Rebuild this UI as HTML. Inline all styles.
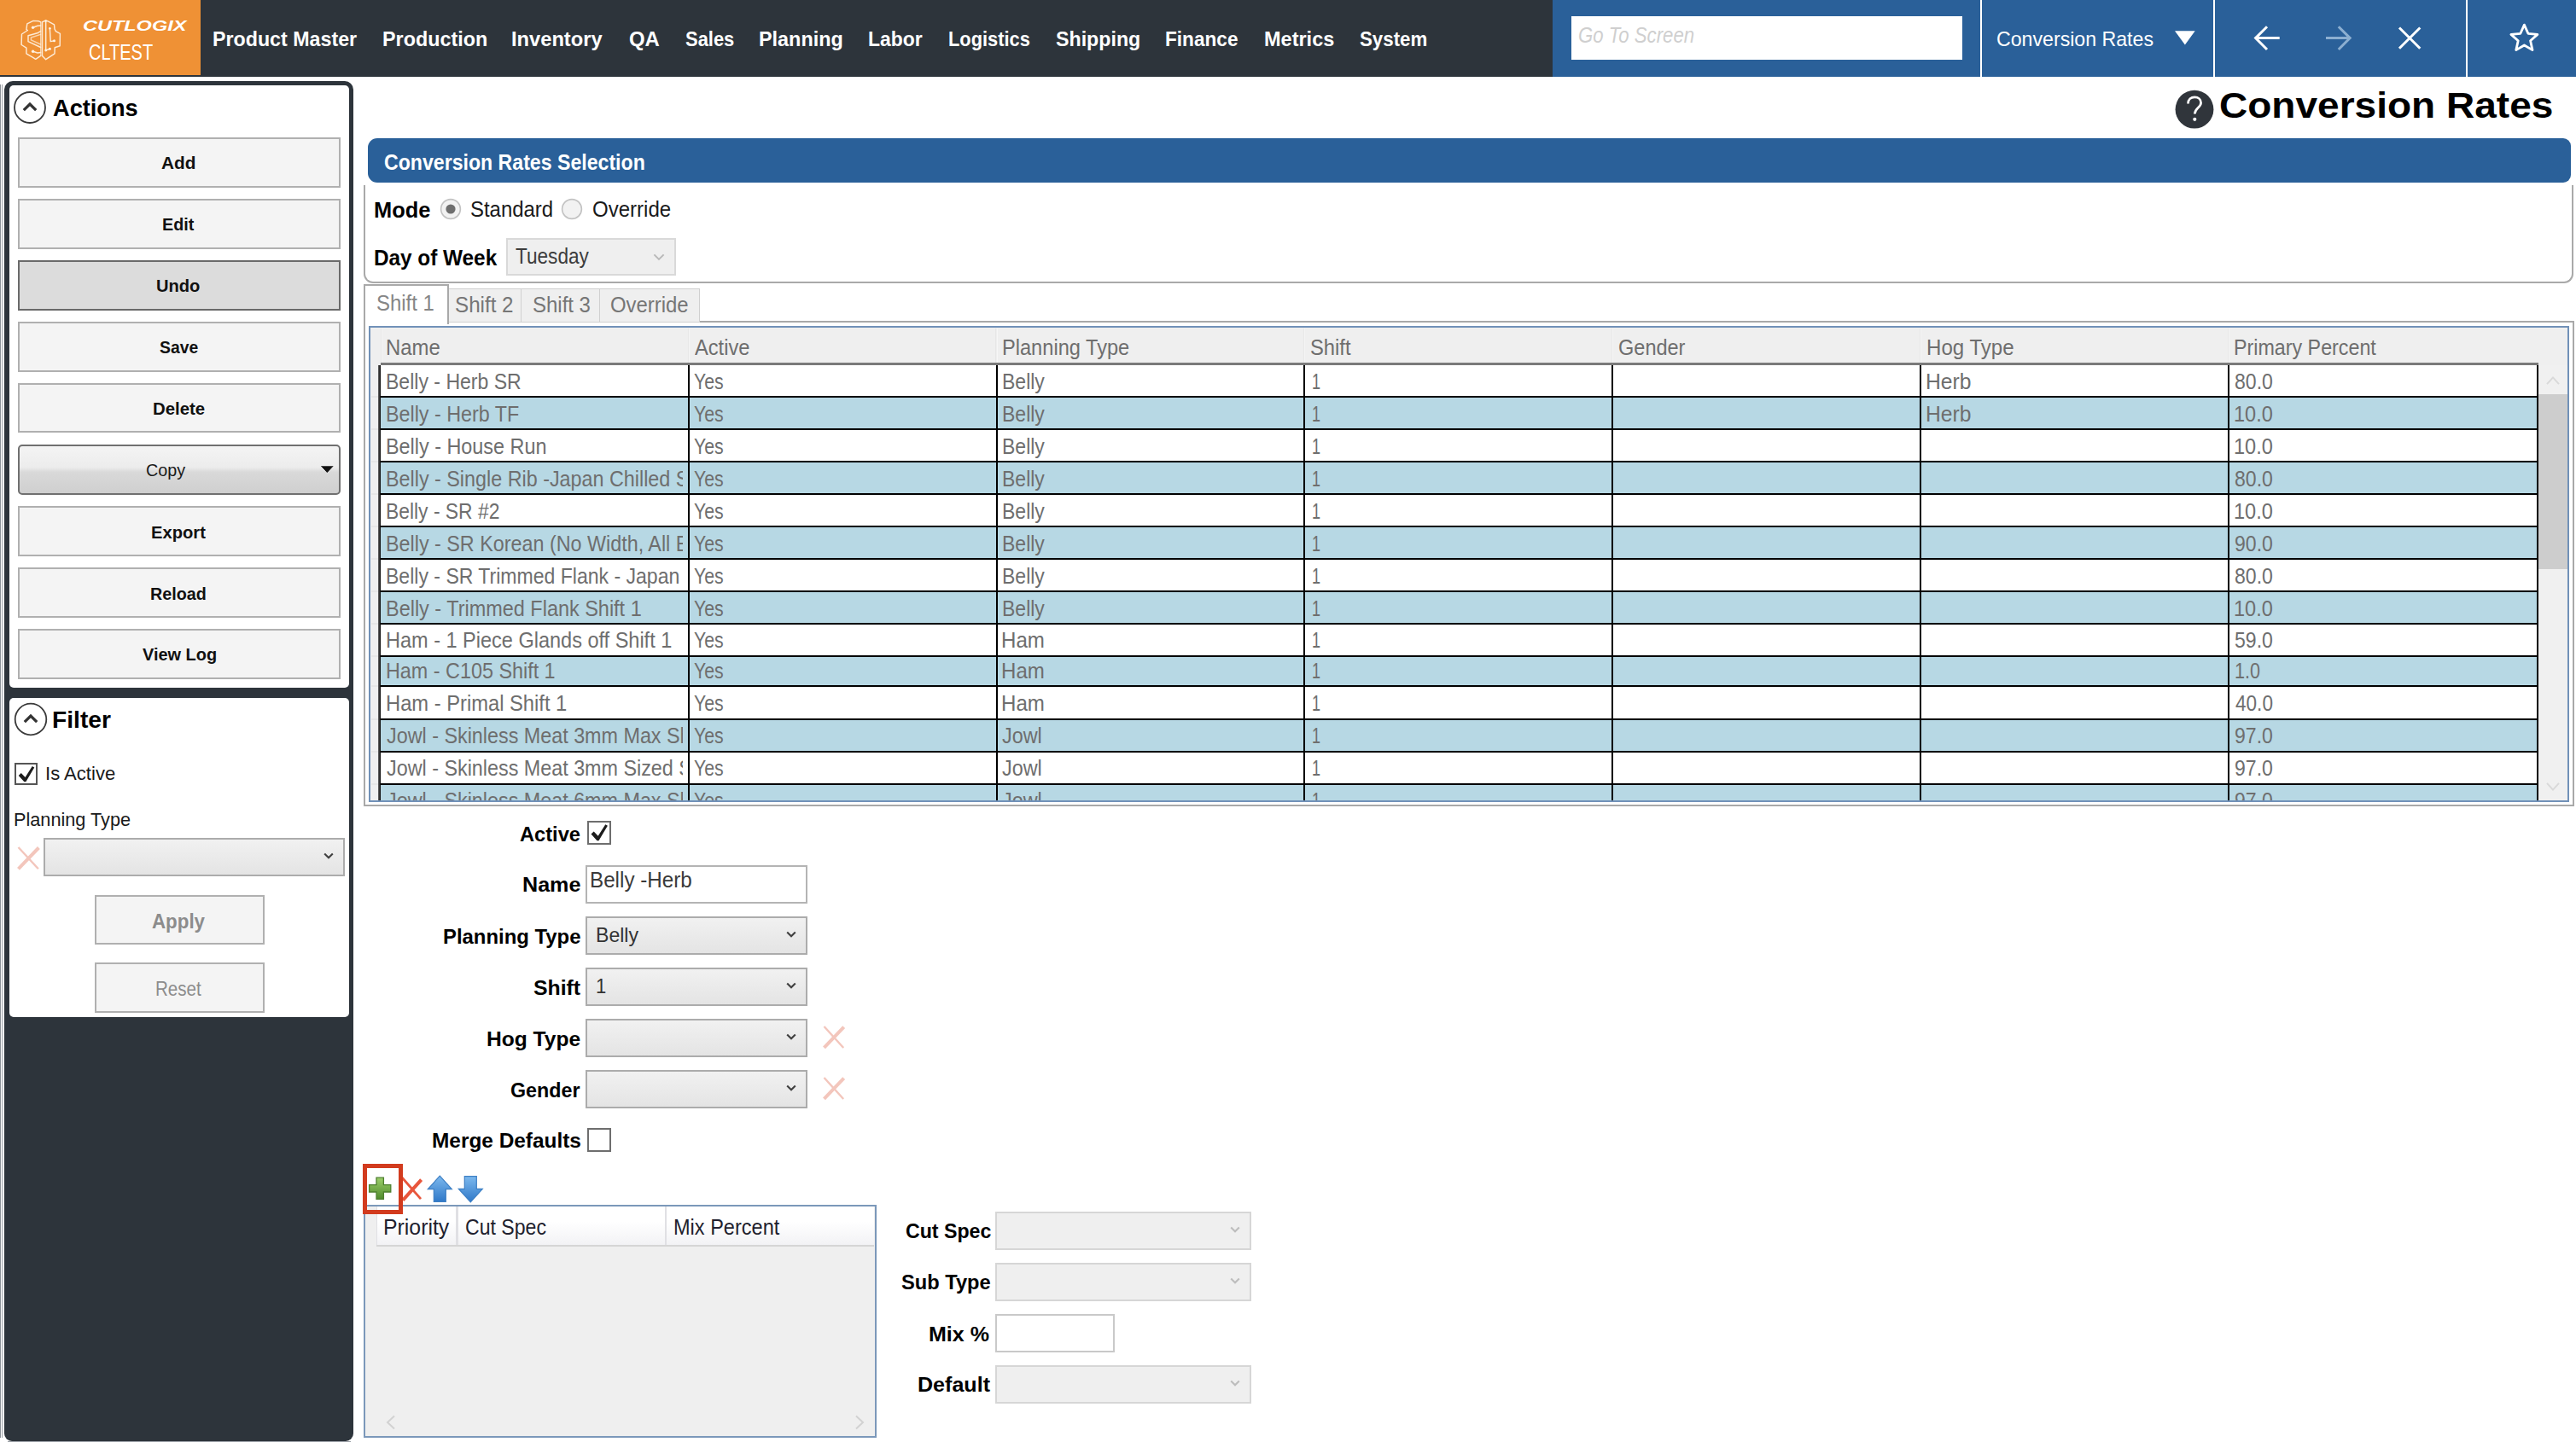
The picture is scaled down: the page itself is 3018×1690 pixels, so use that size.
<!DOCTYPE html>
<html><head><meta charset="utf-8"><title>Conversion Rates</title>
<style>
html,body{margin:0;padding:0;background:#fff;}
body{width:3018px;height:1690px;position:relative;overflow:hidden;font-family:"Liberation Sans",sans-serif;}
body>div,body>svg{position:absolute;box-sizing:border-box;}
div div{position:absolute;box-sizing:border-box;}
.t{position:absolute;white-space:pre;transform-origin:0 0;font-family:"Liberation Sans",sans-serif;}
</style></head><body>
<div style="left:0px;top:0px;width:3018px;height:90.3px;background:#2d343b"></div>
<div style="left:0px;top:0px;width:234.5px;height:88px;background:#ef9135"></div>
<div style="left:1819.4px;top:0px;width:1198.6px;height:90.3px;background:#2a6099"></div>
<div style="left:1841px;top:19px;width:457.6px;height:51px;background:#fff"></div>
<div style="left:2319.6px;top:0px;width:2.2px;height:90.3px;background:#fff"></div>
<div style="left:2593.1px;top:0px;width:2.2px;height:90.3px;background:#fff"></div>
<div style="left:2889.2px;top:0px;width:2.2px;height:90.3px;background:#fff"></div>
<svg style="left:2540px;top:20px" width="460" height="50" viewBox="2540 20 460 50">
<polygon points="2548,36.2 2571.7,36.2 2559.9,52.4" fill="#fff"/>
<g fill="none" stroke="#fff" stroke-width="3">
<path d="M2670.7 44.6H2643M2656 31.2L2642.6 44.6L2656 58"/>
<path d="M2811 32.5L2835.3 56.8M2835.3 32.5L2811 56.8"/>
<path d="M2957.4 29.1L2961.9 39.3L2972.9 40.4L2964.6 47.7L2967.0 58.6L2957.4 53.0L2947.8 58.6L2950.2 47.7L2941.9 40.4L2952.9 39.3Z" stroke-linejoin="round" stroke-width="2.8"/>
</g>
<g fill="none" stroke="#8cafd1" stroke-width="3">
<path d="M2725 44.6H2752.6M2739.8 31.2L2753.2 44.6L2739.8 58"/>
</g></svg>
<svg style="left:20px;top:20px" width="56" height="54" viewBox="20 20 56 54">
<g fill="none" stroke="#fdebd6" stroke-width="1.45" stroke-linejoin="round" stroke-linecap="round">
<path d="M47.6 25.8L45.5 24.8L39 24.4L31.8 27.8L30.9 34.5L32.4 35.5L25.5 40L25.1 52.5L30.9 56.2L30.9 62.8L38.6 67.3L41.8 69.3L47.6 65.4"/>
<path d="M49.8 65.8L53.7 69.7L64 62.8L64.2 55.8L70.2 53.8L70.4 39.4L65.3 36.6L64 34L63.5 28.9L56.7 25.2L53.7 24L49.8 25.7"/>
<path d="M47.9 25.9V65.4M49.6 25.9V65.6" stroke-width="1.2"/>
<path d="M53.7 25V59"/>
<path d="M47.6 36.6L43.8 38.8L33 41.8L33 48.7L47.6 55.5"/>
<path d="M47.6 40.4L36.4 44L36.4 46.8L47.6 52" stroke-opacity=".75"/>
<path d="M38.6 32.3L44 30.2L47.6 30"/>
<path d="M38.6 60.3L44 62L47.6 61.5"/>
<path d="M58.4 33.2L59.2 48.6L63.5 47.8"/>
<path d="M53.7 59L58.4 57.2"/>
</g>
<g fill="#fff3e4"><circle cx="38.6" cy="32.3" r="1.7"/><circle cx="38.6" cy="60.3" r="1.7"/><circle cx="58.4" cy="33.2" r="1.3"/><circle cx="63.5" cy="47.8" r="1.5"/><circle cx="58.4" cy="57.2" r="1.5"/><circle cx="53.7" cy="59" r="1.4"/><circle cx="53.7" cy="24.6" r="1.2"/></g>
</svg>
<svg style="left:2546px;top:104px" width="50" height="50" viewBox="2546 104 50 50">
<circle cx="2571" cy="128.2" r="22.4" fill="#30353b"/>
<path d="M2563.5 121.5C2563.5 116.5 2567 113.8 2571.2 113.8C2575.6 113.8 2578.6 116.6 2578.6 120.4C2578.6 126 2571.3 126.5 2571.3 133.5" fill="none" stroke="#fff" stroke-width="2.7"/>
<circle cx="2571.3" cy="139.8" r="2.1" fill="#fff"/></svg>
<div style="left:0px;top:99px;width:1px;height:1586px;background:#8a9096"></div>
<div style="left:2.1px;top:99px;width:1px;height:1586px;background:#9aa0a6"></div>
<div style="left:9px;top:1688.5px;width:402px;height:1.5px;background:#9a9fa5"></div>
<div style="left:5px;top:94.5px;width:409.3px;height:1594.5px;background:#2d343b;border-radius:10px 10px 9px 9px"></div>
<div style="left:10.5px;top:100px;width:398px;height:706px;background:#fff;border-radius:5px"></div>
<div style="left:10.5px;top:818px;width:398px;height:373.5px;background:#fff;border-radius:5px"></div>
<svg style="left:13.2px;top:103.5px" width="44" height="44" viewBox="-22 -22 44 44"><circle r="18" fill="#fff" stroke="#3a3a3a" stroke-width="1.8"/><path d="M-7.2 3.2L0 -4L7.2 3.2" fill="none" stroke="#333" stroke-width="3.2"/></svg>
<svg style="left:13.8px;top:821px" width="44" height="44" viewBox="-22 -22 44 44"><circle r="18.3" fill="#fff" stroke="#3a3a3a" stroke-width="1.8"/><path d="M-7.2 3.2L0 -4L7.2 3.2" fill="none" stroke="#333" stroke-width="3.2"/></svg>
<div style="left:20.5px;top:160.5px;width:378px;height:59.3px;background:#f4f4f4;border:2px solid #b0b0b0"></div>
<div style="left:20.5px;top:232.6px;width:378px;height:59.2px;background:#f4f4f4;border:2px solid #b0b0b0"></div>
<div style="left:20.5px;top:304.6px;width:378px;height:59.7px;background:#dcdcdc;border:2px solid #6a6a6a"></div>
<div style="left:20.5px;top:376.6px;width:378px;height:59.4px;background:#f4f4f4;border:2px solid #b0b0b0"></div>
<div style="left:20.5px;top:448.7px;width:378px;height:58.8px;background:#f4f4f4;border:2px solid #b0b0b0"></div>
<div style="left:20.5px;top:520.5px;width:378px;height:59px;background:linear-gradient(#f4f4f4 0%,#ececec 45%,#d9d9d9 55%,#cfcfcf 100%);border:2px solid #707070;border-radius:5px"></div>
<div style="left:20.5px;top:593px;width:378px;height:59px;background:#f4f4f4;border:2px solid #b0b0b0"></div>
<div style="left:20.5px;top:665px;width:378px;height:59px;background:#f4f4f4;border:2px solid #b0b0b0"></div>
<div style="left:20.5px;top:736.5px;width:378px;height:59px;background:#f4f4f4;border:2px solid #b0b0b0"></div>
<svg style="left:374px;top:544px" width="20" height="14" viewBox="374 544 20 14"><path d="M376.5 546.2L383.3 553.5L390.1 546.2" fill="#111" stroke="#111" stroke-width="1"/></svg>
<div style="left:16.8px;top:893.8px;width:27.5px;height:26.5px;background:#fff;border:2px solid #555"><svg style="position:absolute;left:-2px;top:-2px" width="27.5" height="26.5" viewBox="0 0 27.7 27.7"><path d="M4.4 15.6L7.6 12.6L12.6 17.8L21.2 4.2L23.8 5.8L13.4 23.2L11.4 23.2Z" fill="#1c1c1c"/></svg></div>
<svg style="left:19.4px;top:990.7px" width="28.4" height="29.3" viewBox="0 0 28.4 29.3"><path d="M2.5 2L25.9 27.3" stroke="#f3c6bc" stroke-width="2.4" fill="none"/><path d="M26.4 2.5L2.5 27.3" stroke="#f3c6bc" stroke-width="4" fill="none"/></svg>
<div style="left:51px;top:982px;width:352.7px;height:45.2px;background:linear-gradient(#f1f1f1,#e4e4e4);border:2px solid #acacac"></div>
<svg style="left:377.1px;top:997px" width="16" height="12" viewBox="-8 -6 16 12"><path d="M-4.8 -2.6L0 2.3L4.8 -2.6" fill="none" stroke="#404040" stroke-width="2.1"/></svg>
<div style="left:110.8px;top:1048.5px;width:199.2px;height:58.9px;background:#f4f4f4;border:2px solid #b0b0b0"></div>
<div style="left:110.8px;top:1128px;width:199.2px;height:59.4px;background:#f4f4f4;border:2px solid #b0b0b0"></div>
<div style="left:426.4px;top:217px;width:2588.8px;height:115.1px;border:2px solid #a9a9a9;border-top:none;border-radius:0 0 11px 11px;background:#fff"></div>
<div style="left:430.5px;top:162px;width:2581.5px;height:52.3px;background:#2a6099;border-radius:11px 9px 9px 11px"></div>
<svg style="left:514.3px;top:230.5px" width="28" height="28" viewBox="-14 -14 28 28"><circle r="11.4" fill="#f2f2f2" stroke="#c2c2c2" stroke-width="1.6"/><circle r="5.6" fill="#6e6e6e"/></svg>
<svg style="left:656px;top:230.5px" width="28" height="28" viewBox="-14 -14 28 28"><circle r="11.4" fill="#f2f2f2" stroke="#c2c2c2" stroke-width="1.6"/></svg>
<div style="left:592.6px;top:278.8px;width:199.1px;height:44.7px;background:#efefef;border:2px solid #d9d9d9"></div>
<svg style="left:764px;top:295px" width="16" height="12" viewBox="-8 -6 16 12"><path d="M-5.6 -2.6L0 3L5.6 -2.6" fill="none" stroke="#b9b9b9" stroke-width="1.9"/></svg>
<div style="left:426.4px;top:375.7px;width:2589.2px;height:569.8px;border:2px solid #a9a9a9;background:#fff"></div>
<div style="left:525px;top:337.5px;width:86.5px;height:40.5px;background:#efefef;border:1.6px solid #d0d0d0"></div>
<div style="left:610px;top:337.5px;width:93.5px;height:40.5px;background:#efefef;border:1.6px solid #d0d0d0"></div>
<div style="left:702px;top:337.5px;width:117.5px;height:40.5px;background:#efefef;border:1.6px solid #d0d0d0"></div>
<div style="left:426.4px;top:333.3px;width:99.6px;height:46.7px;background:#fff;border:2px solid #a9a9a9;border-bottom:none"></div>
<div style="left:432.4px;top:382.4px;width:2577.5px;height:557.6px;border:2.3px solid #7191b8;background:#efefef"></div>
<div style="left:434.7px;top:384.7px;width:2537.8px;height:40.3px;background:#efefef"></div>
<div style="left:446px;top:424.5px;width:2528px;height:3.5px;background:#7a7a7a"></div>
<div style="left:805.5px;top:385px;width:2.5px;height:39.5px;background:linear-gradient(90deg,#e2e2e2,#fafafa)"></div>
<div style="left:1166px;top:385px;width:2.5px;height:39.5px;background:linear-gradient(90deg,#e2e2e2,#fafafa)"></div>
<div style="left:1526.8px;top:385px;width:2.5px;height:39.5px;background:linear-gradient(90deg,#e2e2e2,#fafafa)"></div>
<div style="left:1887.8px;top:385px;width:2.5px;height:39.5px;background:linear-gradient(90deg,#e2e2e2,#fafafa)"></div>
<div style="left:2248.8px;top:385px;width:2.5px;height:39.5px;background:linear-gradient(90deg,#e2e2e2,#fafafa)"></div>
<div style="left:2609.5px;top:385px;width:2.5px;height:39.5px;background:linear-gradient(90deg,#e2e2e2,#fafafa)"></div>
<div style="left:445.5px;top:385px;width:2px;height:39.5px;background:linear-gradient(90deg,#e2e2e2,#fafafa)"></div>
<div style="left:446px;top:428px;width:2526.7px;height:509.8px;background:#fff"></div>
<div style="left:446px;top:466.2px;width:2526.7px;height:35.9px;background:#b7d8e4"></div>
<div style="left:446px;top:464.2px;width:2526.7px;height:2px;background:#000"></div>
<div style="left:446px;top:502.1px;width:2526.7px;height:2px;background:#000"></div>
<div style="left:446px;top:542.3px;width:2526.7px;height:35.9px;background:#b7d8e4"></div>
<div style="left:446px;top:540.3px;width:2526.7px;height:2px;background:#000"></div>
<div style="left:446px;top:578.2px;width:2526.7px;height:2px;background:#000"></div>
<div style="left:446px;top:618.4px;width:2526.7px;height:35.9px;background:#b7d8e4"></div>
<div style="left:446px;top:616.4px;width:2526.7px;height:2px;background:#000"></div>
<div style="left:446px;top:654.3px;width:2526.7px;height:2px;background:#000"></div>
<div style="left:446px;top:694.2px;width:2526.7px;height:35.5px;background:#b7d8e4"></div>
<div style="left:446px;top:692.2px;width:2526.7px;height:2px;background:#000"></div>
<div style="left:446px;top:729.7px;width:2526.7px;height:2px;background:#000"></div>
<div style="left:446px;top:769.6px;width:2526.7px;height:33.8px;background:#b7d8e4"></div>
<div style="left:446px;top:767.6px;width:2526.7px;height:2px;background:#000"></div>
<div style="left:446px;top:803.4px;width:2526.7px;height:2px;background:#000"></div>
<div style="left:446px;top:843.5px;width:2526.7px;height:36.2px;background:#b7d8e4"></div>
<div style="left:446px;top:841.5px;width:2526.7px;height:2px;background:#000"></div>
<div style="left:446px;top:879.7px;width:2526.7px;height:2px;background:#000"></div>
<div style="left:446px;top:919.6px;width:2526.7px;height:18.2px;background:#b7d8e4"></div>
<div style="left:446px;top:917.6px;width:2526.7px;height:2px;background:#000"></div>
<div style="left:443px;top:427.5px;width:3.3px;height:510.3px;background:linear-gradient(90deg,#6a6a6a,#000)"></div>
<div style="left:806px;top:427.5px;width:2px;height:510.3px;background:#000"></div>
<div style="left:1166.5px;top:427.5px;width:2px;height:510.3px;background:#000"></div>
<div style="left:1527.3px;top:427.5px;width:2px;height:510.3px;background:#000"></div>
<div style="left:1888.3px;top:427.5px;width:2px;height:510.3px;background:#000"></div>
<div style="left:2249.3px;top:427.5px;width:2px;height:510.3px;background:#000"></div>
<div style="left:2610px;top:427.5px;width:2px;height:510.3px;background:#000"></div>
<div style="left:2971.5px;top:427.5px;width:2px;height:510.3px;background:#000"></div>
<div style="left:2974px;top:427.5px;width:33.7px;height:510.3px;background:#f0f0f0"></div>
<div style="left:2974px;top:462px;width:33.7px;height:205px;background:#cdcdcd"></div>
<svg style="left:2979.5px;top:439px" width="22" height="14" viewBox="-11 -7 22 14"><path d="M-7 4.2L0 -3.6L7 4.2" fill="none" stroke="#d9d9d9" stroke-width="2"/></svg>
<svg style="left:2979.5px;top:915.2px" width="22" height="14" viewBox="-11 -7 22 14"><path d="M-7 -4.2L0 3.6L7 -4.2" fill="none" stroke="#d9d9d9" stroke-width="2"/></svg>
<div style="left:435px;top:464.2px;width:8px;height:2px;background:#e6e6e6"></div>
<div style="left:435px;top:502.1px;width:8px;height:2px;background:#e6e6e6"></div>
<div style="left:435px;top:540.3px;width:8px;height:2px;background:#e6e6e6"></div>
<div style="left:435px;top:578.2px;width:8px;height:2px;background:#e6e6e6"></div>
<div style="left:435px;top:616.4px;width:8px;height:2px;background:#e6e6e6"></div>
<div style="left:435px;top:654.3px;width:8px;height:2px;background:#e6e6e6"></div>
<div style="left:435px;top:692.2px;width:8px;height:2px;background:#e6e6e6"></div>
<div style="left:435px;top:729.7px;width:8px;height:2px;background:#e6e6e6"></div>
<div style="left:435px;top:767.6px;width:8px;height:2px;background:#e6e6e6"></div>
<div style="left:435px;top:803.4px;width:8px;height:2px;background:#e6e6e6"></div>
<div style="left:435px;top:841.5px;width:8px;height:2px;background:#e6e6e6"></div>
<div style="left:435px;top:879.7px;width:8px;height:2px;background:#e6e6e6"></div>
<div style="left:435px;top:917.6px;width:8px;height:2px;background:#e6e6e6"></div>
<div style="left:688.3px;top:962px;width:27.9px;height:27.7px;background:#fff;border:2px solid #6e6e6e"><svg style="position:absolute;left:-2px;top:-2px" width="27.9" height="27.7" viewBox="0 0 27.7 27.7"><path d="M4.4 15.6L7.6 12.6L12.6 17.8L21.2 4.2L23.8 5.8L13.4 23.2L11.4 23.2Z" fill="#1c1c1c"/></svg></div>
<div style="left:686.4px;top:1014.4px;width:259.6px;height:44.6px;background:#fff;border:2px solid #b4b4b4"></div>
<div style="left:686.4px;top:1074px;width:259.6px;height:45.4px;background:linear-gradient(#f1f1f1,#e4e4e4);border:2px solid #acacac"></div>
<svg style="left:919.4px;top:1089.1px" width="16" height="12" viewBox="-8 -6 16 12"><path d="M-4.8 -2.6L0 2.3L4.8 -2.6" fill="none" stroke="#404040" stroke-width="2.1"/></svg>
<div style="left:686.4px;top:1134.3px;width:259.6px;height:44.7px;background:linear-gradient(#f1f1f1,#e4e4e4);border:2px solid #acacac"></div>
<svg style="left:919.4px;top:1149.05px" width="16" height="12" viewBox="-8 -6 16 12"><path d="M-4.8 -2.6L0 2.3L4.8 -2.6" fill="none" stroke="#404040" stroke-width="2.1"/></svg>
<div style="left:686.4px;top:1194px;width:259.6px;height:45.3px;background:linear-gradient(#f1f1f1,#e4e4e4);border:2px solid #acacac"></div>
<svg style="left:919.4px;top:1209.05px" width="16" height="12" viewBox="-8 -6 16 12"><path d="M-4.8 -2.6L0 2.3L4.8 -2.6" fill="none" stroke="#404040" stroke-width="2.1"/></svg>
<svg style="left:963.3px;top:1201px" width="27.7" height="29" viewBox="0 0 27.7 29"><path d="M2.5 2L25.2 27" stroke="#f3c6bc" stroke-width="2.4" fill="none"/><path d="M25.7 2.5L2.5 27" stroke="#f3c6bc" stroke-width="4" fill="none"/></svg>
<div style="left:686.4px;top:1254.2px;width:259.6px;height:45px;background:linear-gradient(#f1f1f1,#e4e4e4);border:2px solid #acacac"></div>
<svg style="left:919.4px;top:1269.1px" width="16" height="12" viewBox="-8 -6 16 12"><path d="M-4.8 -2.6L0 2.3L4.8 -2.6" fill="none" stroke="#404040" stroke-width="2.1"/></svg>
<svg style="left:963.3px;top:1261px" width="27.7" height="29" viewBox="0 0 27.7 29"><path d="M2.5 2L25.2 27" stroke="#f3c6bc" stroke-width="2.4" fill="none"/><path d="M25.7 2.5L2.5 27" stroke="#f3c6bc" stroke-width="4" fill="none"/></svg>
<div style="left:688.3px;top:1322px;width:27.9px;height:27.7px;background:#fff;border:2px solid #6e6e6e"></div>
<div style="left:425px;top:1364px;width:47px;height:59px;border:5px solid #d23b1e"></div>
<svg style="left:428px;top:1374px" width="144" height="40" viewBox="428 1374 144 40">
<defs><linearGradient id="gg" x1="0" y1="0" x2="0" y2="1"><stop offset="0" stop-color="#9ccf6a"/><stop offset="1" stop-color="#4f8a2c"/></linearGradient>
<linearGradient id="gb" x1="0" y1="0" x2="0" y2="1"><stop offset="0" stop-color="#7db9ee"/><stop offset="1" stop-color="#2f78c8"/></linearGradient></defs>
<path d="M441 1380.2H449.4V1388.6H457.8V1397H449.4V1405.4H441V1397H432.6V1388.6H441Z" fill="url(#gg)" stroke="#4d7f2e" stroke-width="1.3"/>
<path d="M470.5 1379.5L493 1405.2" stroke="#e8563c" stroke-width="2.8" fill="none"/><path d="M493.6 1382.6L472 1406.6" stroke="#e8563c" stroke-width="4" fill="none"/>
<path d="M515.3 1378.2L529.3 1393.6H522.3V1408.4H508.3V1393.6H501.3Z" fill="url(#gb)" stroke="#3d7fc4" stroke-width="1.2"/>
<path d="M551.3 1408.8L565.3 1393.4H558.3V1378.6H544.3V1393.4H537.3Z" fill="url(#gb)" stroke="#3d7fc4" stroke-width="1.2"/>
</svg>
<div style="left:426.4px;top:1412px;width:600.2px;height:273.3px;background:#efefef;border:2.2px solid #7b98ba"></div>
<div style="left:440.8px;top:1414.2px;width:583.4px;height:47.2px;background:linear-gradient(#ffffff 0%,#ffffff 40%,#f2f2f5 100%);border-bottom:2px solid #d5d5d5"></div>
<div style="left:534.3px;top:1414.2px;width:2.3px;height:45.2px;background:#e0e0e4"></div>
<div style="left:779px;top:1414.2px;width:2.3px;height:45.2px;background:#e0e0e4"></div>
<div style="left:440.8px;top:1414.2px;width:1.5px;height:45.2px;background:#e0e0e4"></div>
<svg style="left:450px;top:1656px" width="16" height="22" viewBox="-8 -11 16 22"><path d="M4 -7.5L-4 0L4 7.5" fill="none" stroke="#d2d2d2" stroke-width="2"/></svg>
<svg style="left:999px;top:1656px" width="16" height="22" viewBox="-8 -11 16 22"><path d="M-4 -7.5L4 0L-4 7.5" fill="none" stroke="#d2d2d2" stroke-width="2"/></svg>
<div style="left:425px;top:1364px;width:47px;height:59px;border:5px solid #d23b1e"></div>
<div style="left:1166.3px;top:1420px;width:299.7px;height:45px;background:#efefef;border:2px solid #d6d6d6"></div>
<svg style="left:1439.4px;top:1434.9px" width="16" height="12" viewBox="-8 -6 16 12"><path d="M-4.8 -2.6L0 2.3L4.8 -2.6" fill="none" stroke="#bdbdbd" stroke-width="2.1"/></svg>
<div style="left:1166.3px;top:1480px;width:299.7px;height:45.4px;background:#efefef;border:2px solid #d6d6d6"></div>
<svg style="left:1439.4px;top:1495.1px" width="16" height="12" viewBox="-8 -6 16 12"><path d="M-4.8 -2.6L0 2.3L4.8 -2.6" fill="none" stroke="#bdbdbd" stroke-width="2.1"/></svg>
<div style="left:1166.3px;top:1540.3px;width:139.4px;height:44.9px;background:#fff;border:2px solid #c9c9c9"></div>
<div style="left:1166.3px;top:1600px;width:299.7px;height:45px;background:#efefef;border:2px solid #d6d6d6"></div>
<svg style="left:1439.4px;top:1614.9px" width="16" height="12" viewBox="-8 -6 16 12"><path d="M-4.8 -2.6L0 2.3L4.8 -2.6" fill="none" stroke="#bdbdbd" stroke-width="2.1"/></svg>
<span class="t" style="left:248.50px;top:34.00px;font-size:24.5px;line-height:24.5px;font-weight:700;color:#fff;transform:scaleX(0.9483)">Product Master</span>
<span class="t" style="left:447.60px;top:34.00px;font-size:24.5px;line-height:24.5px;font-weight:700;color:#fff;transform:scaleX(0.9524)">Production</span>
<span class="t" style="left:599.37px;top:34.00px;font-size:24.5px;line-height:24.5px;font-weight:700;color:#fff;transform:scaleX(0.9667)">Inventory</span>
<span class="t" style="left:736.63px;top:34.00px;font-size:24.5px;line-height:24.5px;font-weight:700;color:#fff;transform:scaleX(0.9743)">QA</span>
<span class="t" style="left:802.70px;top:34.00px;font-size:24.5px;line-height:24.5px;font-weight:700;color:#fff;transform:scaleX(0.8952)">Sales</span>
<span class="t" style="left:888.59px;top:34.00px;font-size:24.5px;line-height:24.5px;font-weight:700;color:#fff;transform:scaleX(0.9550)">Planning</span>
<span class="t" style="left:1016.73px;top:34.00px;font-size:24.5px;line-height:24.5px;font-weight:700;color:#fff;transform:scaleX(0.9364)">Labor</span>
<span class="t" style="left:1110.82px;top:34.00px;font-size:24.5px;line-height:24.5px;font-weight:700;color:#fff;transform:scaleX(0.8905)">Logistics</span>
<span class="t" style="left:1237.05px;top:34.00px;font-size:24.5px;line-height:24.5px;font-weight:700;color:#fff;transform:scaleX(0.9471)">Shipping</span>
<span class="t" style="left:1365.35px;top:34.00px;font-size:24.5px;line-height:24.5px;font-weight:700;color:#fff;transform:scaleX(0.9233)">Finance</span>
<span class="t" style="left:1480.58px;top:34.00px;font-size:24.5px;line-height:24.5px;font-weight:700;color:#fff;transform:scaleX(0.9590)">Metrics</span>
<span class="t" style="left:1593.39px;top:34.00px;font-size:24.5px;line-height:24.5px;font-weight:700;color:#fff;transform:scaleX(0.9094)">System</span>
<span class="t" style="left:1849.13px;top:29.00px;font-size:25.5px;line-height:25.5px;font-style:italic;color:#cfcfcf;transform:scaleX(0.8701)">Go To Screen</span>
<span class="t" style="left:2338.64px;top:34.00px;font-size:24px;line-height:24px;color:#fff;transform:scaleX(0.9646)">Conversion Rates</span>
<span class="t" style="left:103.82px;top:49.00px;font-size:25.5px;line-height:25.5px;color:#fff;transform:scaleX(0.7840)">CLTEST</span>
<span class="t" style="left:96.98px;top:22.00px;font-size:16.5px;line-height:16.5px;font-weight:700;font-style:italic;color:#fff;transform:scaleX(1.4235)">CUTLOGIX</span>
<span class="t" style="left:2600.41px;top:103.00px;font-size:42px;line-height:42px;font-weight:700;color:#000;transform:scaleX(1.0960)">Conversion Rates</span>
<span class="t" style="left:61.99px;top:114.00px;font-size:27px;line-height:27px;font-weight:700;color:#000;transform:scaleX(1.0072)">Actions</span>
<span class="t" style="left:61.41px;top:831.00px;font-size:27px;line-height:27px;font-weight:700;color:#000;transform:scaleX(1.0438)">Filter</span>
<span class="t" style="left:188.96px;top:181.00px;font-size:20px;line-height:20px;font-weight:700;color:#111;transform:scaleX(1.0378)">Add</span>
<span class="t" style="left:190.01px;top:253.00px;font-size:20px;line-height:20px;font-weight:700;color:#111;transform:scaleX(0.9865)">Edit</span>
<span class="t" style="left:183.29px;top:325.00px;font-size:20px;line-height:20px;font-weight:700;color:#111;transform:scaleX(1.0060)">Undo</span>
<span class="t" style="left:186.73px;top:397.00px;font-size:20px;line-height:20px;font-weight:700;color:#111;transform:scaleX(0.9667)">Save</span>
<span class="t" style="left:178.68px;top:469.00px;font-size:20px;line-height:20px;font-weight:700;color:#111;transform:scaleX(1.0186)">Delete</span>
<span class="t" style="left:170.81px;top:541.00px;font-size:20px;line-height:20px;color:#1a1a1a;transform:scaleX(0.9870)">Copy</span>
<span class="t" style="left:177.49px;top:614.00px;font-size:20px;line-height:20px;font-weight:700;color:#111;transform:scaleX(1.0081)">Export</span>
<span class="t" style="left:176.31px;top:686.00px;font-size:20px;line-height:20px;font-weight:700;color:#111;transform:scaleX(0.9862)">Reload</span>
<span class="t" style="left:166.50px;top:757.00px;font-size:20px;line-height:20px;font-weight:700;color:#111;transform:scaleX(0.9965)">View Log</span>
<span class="t" style="left:52.99px;top:896.00px;font-size:22px;line-height:22px;color:#1a1a1a;transform:scaleX(1.0038)">Is Active</span>
<span class="t" style="left:15.73px;top:950.00px;font-size:22px;line-height:22px;color:#1a1a1a;transform:scaleX(0.9853)">Planning Type</span>
<span class="t" style="left:178.45px;top:1069.00px;font-size:23.5px;line-height:23.5px;font-weight:700;color:#8c8c8c;transform:scaleX(0.9500)">Apply</span>
<span class="t" style="left:181.91px;top:1148.00px;font-size:23px;line-height:23px;color:#8c8c8c;transform:scaleX(0.8948)">Reset</span>
<span class="t" style="left:449.79px;top:178.00px;font-size:25.5px;line-height:25.5px;font-weight:700;color:#fff;transform:scaleX(0.9066)">Conversion Rates Selection</span>
<span class="t" style="left:438.21px;top:234.00px;font-size:25.5px;line-height:25.5px;font-weight:700;color:#000;transform:scaleX(0.9969)">Mode</span>
<span class="t" style="left:550.66px;top:233.00px;font-size:25.5px;line-height:25.5px;color:#1a1a1a;transform:scaleX(0.9386)">Standard</span>
<span class="t" style="left:693.56px;top:233.00px;font-size:25.5px;line-height:25.5px;color:#1a1a1a;transform:scaleX(0.9427)">Override</span>
<span class="t" style="left:438.29px;top:290.00px;font-size:25.5px;line-height:25.5px;font-weight:700;color:#000;transform:scaleX(0.9537)">Day of Week</span>
<span class="t" style="left:603.80px;top:288.00px;font-size:25.5px;line-height:25.5px;color:#3c3c3c;transform:scaleX(0.8866)">Tuesday</span>
<span class="t" style="left:441.36px;top:343.00px;font-size:25.5px;line-height:25.5px;color:#868686;transform:scaleX(0.9386)">Shift 1</span>
<span class="t" style="left:533.05px;top:345.00px;font-size:25.5px;line-height:25.5px;color:#767676;transform:scaleX(0.9486)">Shift 2</span>
<span class="t" style="left:624.06px;top:345.00px;font-size:25.5px;line-height:25.5px;color:#767676;transform:scaleX(0.9400)">Shift 3</span>
<span class="t" style="left:715.06px;top:345.00px;font-size:25.5px;line-height:25.5px;color:#767676;transform:scaleX(0.9375)">Override</span>
<span class="t" style="left:451.56px;top:394.00px;font-size:26px;line-height:26px;color:#6e6e6e;transform:scaleX(0.9194)">Name</span>
<span class="t" style="left:814.00px;top:394.00px;font-size:26px;line-height:26px;color:#6e6e6e;transform:scaleX(0.9100)">Active</span>
<span class="t" style="left:1173.68px;top:394.00px;font-size:26px;line-height:26px;color:#6e6e6e;transform:scaleX(0.9081)">Planning Type</span>
<span class="t" style="left:1535.09px;top:394.00px;font-size:26px;line-height:26px;color:#6e6e6e;transform:scaleX(0.9137)">Shift</span>
<span class="t" style="left:1896.00px;top:394.00px;font-size:26px;line-height:26px;color:#6e6e6e;transform:scaleX(0.9047)">Gender</span>
<span class="t" style="left:2256.55px;top:394.00px;font-size:26px;line-height:26px;color:#6e6e6e;transform:scaleX(0.9259)">Hog Type</span>
<span class="t" style="left:2617.41px;top:394.00px;font-size:26px;line-height:26px;color:#6e6e6e;transform:scaleX(0.8951)">Primary Percent</span>
<div style="left:446.5px;top:428.3px;width:353px;height:35.9px;overflow:hidden"><span class="t" style="left:5.69px;top:6.70px;font-size:25.5px;line-height:25.5px;color:#6e6e6e;transform:scaleX(0.9035)">Belly - Herb SR</span></div>
<div style="left:808px;top:428.3px;width:352px;height:35.9px;overflow:hidden"><span class="t" style="left:4.76px;top:6.70px;font-size:25.5px;line-height:25.5px;color:#6e6e6e;transform:scaleX(0.8350)">Yes</span></div>
<div style="left:1168.5px;top:428.3px;width:352.3px;height:35.9px;overflow:hidden"><span class="t" style="left:5.50px;top:6.70px;font-size:25.5px;line-height:25.5px;color:#6e6e6e;transform:scaleX(0.9019)">Belly</span></div>
<div style="left:1529.3px;top:428.3px;width:352.5px;height:35.9px;overflow:hidden"><span class="t" style="left:7.48px;top:6.70px;font-size:25.5px;line-height:25.5px;color:#6e6e6e;transform:scaleX(0.7091)">1</span></div>
<div style="left:2251.3px;top:428.3px;width:352.2px;height:35.9px;overflow:hidden"><span class="t" style="left:5.17px;top:6.70px;font-size:25.5px;line-height:25.5px;color:#6e6e6e;transform:scaleX(0.9673)">Herb</span></div>
<div style="left:2612px;top:428.3px;width:353px;height:35.9px;overflow:hidden"><span class="t" style="left:5.70px;top:6.70px;font-size:25.5px;line-height:25.5px;color:#6e6e6e;transform:scaleX(0.9042)">80.0</span></div>
<div style="left:446.5px;top:466.2px;width:353px;height:35.9px;overflow:hidden"><span class="t" style="left:5.67px;top:6.80px;font-size:25.5px;line-height:25.5px;color:#6e6e6e;transform:scaleX(0.9137)">Belly - Herb TF</span></div>
<div style="left:808px;top:466.2px;width:352px;height:35.9px;overflow:hidden"><span class="t" style="left:4.76px;top:6.80px;font-size:25.5px;line-height:25.5px;color:#6e6e6e;transform:scaleX(0.8350)">Yes</span></div>
<div style="left:1168.5px;top:466.2px;width:352.3px;height:35.9px;overflow:hidden"><span class="t" style="left:5.50px;top:6.80px;font-size:25.5px;line-height:25.5px;color:#6e6e6e;transform:scaleX(0.9019)">Belly</span></div>
<div style="left:1529.3px;top:466.2px;width:352.5px;height:35.9px;overflow:hidden"><span class="t" style="left:7.48px;top:6.80px;font-size:25.5px;line-height:25.5px;color:#6e6e6e;transform:scaleX(0.7091)">1</span></div>
<div style="left:2251.3px;top:466.2px;width:352.2px;height:35.9px;overflow:hidden"><span class="t" style="left:5.17px;top:6.80px;font-size:25.5px;line-height:25.5px;color:#6e6e6e;transform:scaleX(0.9673)">Herb</span></div>
<div style="left:2612px;top:466.2px;width:353px;height:35.9px;overflow:hidden"><span class="t" style="left:4.75px;top:6.80px;font-size:25.5px;line-height:25.5px;color:#6e6e6e;transform:scaleX(0.9234)">10.0</span></div>
<div style="left:446.5px;top:504.1px;width:353px;height:36.2px;overflow:hidden"><span class="t" style="left:5.67px;top:6.90px;font-size:25.5px;line-height:25.5px;color:#6e6e6e;transform:scaleX(0.9168)">Belly - House Run</span></div>
<div style="left:808px;top:504.1px;width:352px;height:36.2px;overflow:hidden"><span class="t" style="left:4.76px;top:6.90px;font-size:25.5px;line-height:25.5px;color:#6e6e6e;transform:scaleX(0.8350)">Yes</span></div>
<div style="left:1168.5px;top:504.1px;width:352.3px;height:36.2px;overflow:hidden"><span class="t" style="left:5.50px;top:6.90px;font-size:25.5px;line-height:25.5px;color:#6e6e6e;transform:scaleX(0.9019)">Belly</span></div>
<div style="left:1529.3px;top:504.1px;width:352.5px;height:36.2px;overflow:hidden"><span class="t" style="left:7.48px;top:6.90px;font-size:25.5px;line-height:25.5px;color:#6e6e6e;transform:scaleX(0.7091)">1</span></div>
<div style="left:2612px;top:504.1px;width:353px;height:36.2px;overflow:hidden"><span class="t" style="left:4.75px;top:6.90px;font-size:25.5px;line-height:25.5px;color:#6e6e6e;transform:scaleX(0.9234)">10.0</span></div>
<div style="left:446.5px;top:542.3px;width:353px;height:35.9px;overflow:hidden"><span class="t" style="left:5.67px;top:6.70px;font-size:25.5px;line-height:25.5px;color:#6e6e6e;transform:scaleX(0.9150)">Belly - Single Rib -Japan Chilled SR</span></div>
<div style="left:808px;top:542.3px;width:352px;height:35.9px;overflow:hidden"><span class="t" style="left:4.76px;top:6.70px;font-size:25.5px;line-height:25.5px;color:#6e6e6e;transform:scaleX(0.8350)">Yes</span></div>
<div style="left:1168.5px;top:542.3px;width:352.3px;height:35.9px;overflow:hidden"><span class="t" style="left:5.50px;top:6.70px;font-size:25.5px;line-height:25.5px;color:#6e6e6e;transform:scaleX(0.9019)">Belly</span></div>
<div style="left:1529.3px;top:542.3px;width:352.5px;height:35.9px;overflow:hidden"><span class="t" style="left:7.48px;top:6.70px;font-size:25.5px;line-height:25.5px;color:#6e6e6e;transform:scaleX(0.7091)">1</span></div>
<div style="left:2612px;top:542.3px;width:353px;height:35.9px;overflow:hidden"><span class="t" style="left:5.70px;top:6.70px;font-size:25.5px;line-height:25.5px;color:#6e6e6e;transform:scaleX(0.9042)">80.0</span></div>
<div style="left:446.5px;top:580.2px;width:353px;height:36.2px;overflow:hidden"><span class="t" style="left:5.71px;top:6.80px;font-size:25.5px;line-height:25.5px;color:#6e6e6e;transform:scaleX(0.8966)">Belly - SR #2</span></div>
<div style="left:808px;top:580.2px;width:352px;height:36.2px;overflow:hidden"><span class="t" style="left:4.76px;top:6.80px;font-size:25.5px;line-height:25.5px;color:#6e6e6e;transform:scaleX(0.8350)">Yes</span></div>
<div style="left:1168.5px;top:580.2px;width:352.3px;height:36.2px;overflow:hidden"><span class="t" style="left:5.50px;top:6.80px;font-size:25.5px;line-height:25.5px;color:#6e6e6e;transform:scaleX(0.9019)">Belly</span></div>
<div style="left:1529.3px;top:580.2px;width:352.5px;height:36.2px;overflow:hidden"><span class="t" style="left:7.48px;top:6.80px;font-size:25.5px;line-height:25.5px;color:#6e6e6e;transform:scaleX(0.7091)">1</span></div>
<div style="left:2612px;top:580.2px;width:353px;height:36.2px;overflow:hidden"><span class="t" style="left:4.75px;top:6.80px;font-size:25.5px;line-height:25.5px;color:#6e6e6e;transform:scaleX(0.9234)">10.0</span></div>
<div style="left:446.5px;top:618.4px;width:353px;height:35.9px;overflow:hidden"><span class="t" style="left:5.67px;top:6.60px;font-size:25.5px;line-height:25.5px;color:#6e6e6e;transform:scaleX(0.9150)">Belly - SR Korean (No Width, All Bellies)</span></div>
<div style="left:808px;top:618.4px;width:352px;height:35.9px;overflow:hidden"><span class="t" style="left:4.76px;top:6.60px;font-size:25.5px;line-height:25.5px;color:#6e6e6e;transform:scaleX(0.8350)">Yes</span></div>
<div style="left:1168.5px;top:618.4px;width:352.3px;height:35.9px;overflow:hidden"><span class="t" style="left:5.50px;top:6.60px;font-size:25.5px;line-height:25.5px;color:#6e6e6e;transform:scaleX(0.9019)">Belly</span></div>
<div style="left:1529.3px;top:618.4px;width:352.5px;height:35.9px;overflow:hidden"><span class="t" style="left:7.48px;top:6.60px;font-size:25.5px;line-height:25.5px;color:#6e6e6e;transform:scaleX(0.7091)">1</span></div>
<div style="left:2612px;top:618.4px;width:353px;height:35.9px;overflow:hidden"><span class="t" style="left:5.70px;top:6.60px;font-size:25.5px;line-height:25.5px;color:#6e6e6e;transform:scaleX(0.9042)">90.0</span></div>
<div style="left:446.5px;top:656.3px;width:353px;height:35.9px;overflow:hidden"><span class="t" style="left:5.69px;top:6.70px;font-size:25.5px;line-height:25.5px;color:#6e6e6e;transform:scaleX(0.9032)">Belly - SR Trimmed Flank - Japan</span></div>
<div style="left:808px;top:656.3px;width:352px;height:35.9px;overflow:hidden"><span class="t" style="left:4.76px;top:6.70px;font-size:25.5px;line-height:25.5px;color:#6e6e6e;transform:scaleX(0.8350)">Yes</span></div>
<div style="left:1168.5px;top:656.3px;width:352.3px;height:35.9px;overflow:hidden"><span class="t" style="left:5.50px;top:6.70px;font-size:25.5px;line-height:25.5px;color:#6e6e6e;transform:scaleX(0.9019)">Belly</span></div>
<div style="left:1529.3px;top:656.3px;width:352.5px;height:35.9px;overflow:hidden"><span class="t" style="left:7.48px;top:6.70px;font-size:25.5px;line-height:25.5px;color:#6e6e6e;transform:scaleX(0.7091)">1</span></div>
<div style="left:2612px;top:656.3px;width:353px;height:35.9px;overflow:hidden"><span class="t" style="left:5.70px;top:6.70px;font-size:25.5px;line-height:25.5px;color:#6e6e6e;transform:scaleX(0.9042)">80.0</span></div>
<div style="left:446.5px;top:694.2px;width:353px;height:35.5px;overflow:hidden"><span class="t" style="left:5.66px;top:6.80px;font-size:25.5px;line-height:25.5px;color:#6e6e6e;transform:scaleX(0.9195)">Belly - Trimmed Flank Shift 1</span></div>
<div style="left:808px;top:694.2px;width:352px;height:35.5px;overflow:hidden"><span class="t" style="left:4.76px;top:6.80px;font-size:25.5px;line-height:25.5px;color:#6e6e6e;transform:scaleX(0.8350)">Yes</span></div>
<div style="left:1168.5px;top:694.2px;width:352.3px;height:35.5px;overflow:hidden"><span class="t" style="left:5.50px;top:6.80px;font-size:25.5px;line-height:25.5px;color:#6e6e6e;transform:scaleX(0.9019)">Belly</span></div>
<div style="left:1529.3px;top:694.2px;width:352.5px;height:35.5px;overflow:hidden"><span class="t" style="left:7.48px;top:6.80px;font-size:25.5px;line-height:25.5px;color:#6e6e6e;transform:scaleX(0.7091)">1</span></div>
<div style="left:2612px;top:694.2px;width:353px;height:35.5px;overflow:hidden"><span class="t" style="left:4.75px;top:6.80px;font-size:25.5px;line-height:25.5px;color:#6e6e6e;transform:scaleX(0.9234)">10.0</span></div>
<div style="left:446.5px;top:731.7px;width:353px;height:35.9px;overflow:hidden"><span class="t" style="left:5.66px;top:6.30px;font-size:25.5px;line-height:25.5px;color:#6e6e6e;transform:scaleX(0.9216)">Ham - 1 Piece Glands off Shift 1</span></div>
<div style="left:808px;top:731.7px;width:352px;height:35.9px;overflow:hidden"><span class="t" style="left:4.76px;top:6.30px;font-size:25.5px;line-height:25.5px;color:#6e6e6e;transform:scaleX(0.8350)">Yes</span></div>
<div style="left:1168.5px;top:731.7px;width:352.3px;height:35.9px;overflow:hidden"><span class="t" style="left:4.91px;top:6.30px;font-size:25.5px;line-height:25.5px;color:#6e6e6e;transform:scaleX(0.9440)">Ham</span></div>
<div style="left:1529.3px;top:731.7px;width:352.5px;height:35.9px;overflow:hidden"><span class="t" style="left:7.48px;top:6.30px;font-size:25.5px;line-height:25.5px;color:#6e6e6e;transform:scaleX(0.7091)">1</span></div>
<div style="left:2612px;top:731.7px;width:353px;height:35.9px;overflow:hidden"><span class="t" style="left:5.70px;top:6.30px;font-size:25.5px;line-height:25.5px;color:#6e6e6e;transform:scaleX(0.9042)">59.0</span></div>
<div style="left:446.5px;top:769.6px;width:353px;height:33.8px;overflow:hidden"><span class="t" style="left:5.67px;top:4.40px;font-size:25.5px;line-height:25.5px;color:#6e6e6e;transform:scaleX(0.9159)">Ham - C105 Shift 1</span></div>
<div style="left:808px;top:769.6px;width:352px;height:33.8px;overflow:hidden"><span class="t" style="left:4.76px;top:4.40px;font-size:25.5px;line-height:25.5px;color:#6e6e6e;transform:scaleX(0.8350)">Yes</span></div>
<div style="left:1168.5px;top:769.6px;width:352.3px;height:33.8px;overflow:hidden"><span class="t" style="left:4.91px;top:4.40px;font-size:25.5px;line-height:25.5px;color:#6e6e6e;transform:scaleX(0.9440)">Ham</span></div>
<div style="left:1529.3px;top:769.6px;width:352.5px;height:33.8px;overflow:hidden"><span class="t" style="left:7.48px;top:4.40px;font-size:25.5px;line-height:25.5px;color:#6e6e6e;transform:scaleX(0.7091)">1</span></div>
<div style="left:2612px;top:769.6px;width:353px;height:33.8px;overflow:hidden"><span class="t" style="left:6.30px;top:4.40px;font-size:25.5px;line-height:25.5px;color:#6e6e6e;transform:scaleX(0.8485)">1.0</span></div>
<div style="left:446.5px;top:805.4px;width:353px;height:36.1px;overflow:hidden"><span class="t" style="left:5.64px;top:6.60px;font-size:25.5px;line-height:25.5px;color:#6e6e6e;transform:scaleX(0.9307)">Ham - Primal Shift 1</span></div>
<div style="left:808px;top:805.4px;width:352px;height:36.1px;overflow:hidden"><span class="t" style="left:4.76px;top:6.60px;font-size:25.5px;line-height:25.5px;color:#6e6e6e;transform:scaleX(0.8350)">Yes</span></div>
<div style="left:1168.5px;top:805.4px;width:352.3px;height:36.1px;overflow:hidden"><span class="t" style="left:4.91px;top:6.60px;font-size:25.5px;line-height:25.5px;color:#6e6e6e;transform:scaleX(0.9440)">Ham</span></div>
<div style="left:1529.3px;top:805.4px;width:352.5px;height:36.1px;overflow:hidden"><span class="t" style="left:7.48px;top:6.60px;font-size:25.5px;line-height:25.5px;color:#6e6e6e;transform:scaleX(0.7091)">1</span></div>
<div style="left:2612px;top:805.4px;width:353px;height:36.1px;overflow:hidden"><span class="t" style="left:6.60px;top:6.60px;font-size:25.5px;line-height:25.5px;color:#6e6e6e;transform:scaleX(0.8857)">40.0</span></div>
<div style="left:446.5px;top:843.5px;width:353px;height:36.2px;overflow:hidden"><span class="t" style="left:6.58px;top:6.50px;font-size:25.5px;line-height:25.5px;color:#6e6e6e;transform:scaleX(0.9150)">Jowl - Skinless Meat 3mm Max Shift 1</span></div>
<div style="left:808px;top:843.5px;width:352px;height:36.2px;overflow:hidden"><span class="t" style="left:4.76px;top:6.50px;font-size:25.5px;line-height:25.5px;color:#6e6e6e;transform:scaleX(0.8350)">Yes</span></div>
<div style="left:1168.5px;top:843.5px;width:352.3px;height:36.2px;overflow:hidden"><span class="t" style="left:5.58px;top:6.50px;font-size:25.5px;line-height:25.5px;color:#6e6e6e;transform:scaleX(0.9167)">Jowl</span></div>
<div style="left:1529.3px;top:843.5px;width:352.5px;height:36.2px;overflow:hidden"><span class="t" style="left:7.48px;top:6.50px;font-size:25.5px;line-height:25.5px;color:#6e6e6e;transform:scaleX(0.7091)">1</span></div>
<div style="left:2612px;top:843.5px;width:353px;height:36.2px;overflow:hidden"><span class="t" style="left:5.70px;top:6.50px;font-size:25.5px;line-height:25.5px;color:#6e6e6e;transform:scaleX(0.9042)">97.0</span></div>
<div style="left:446.5px;top:881.7px;width:353px;height:35.9px;overflow:hidden"><span class="t" style="left:6.58px;top:6.30px;font-size:25.5px;line-height:25.5px;color:#6e6e6e;transform:scaleX(0.9150)">Jowl - Skinless Meat 3mm Sized Shift 1</span></div>
<div style="left:808px;top:881.7px;width:352px;height:35.9px;overflow:hidden"><span class="t" style="left:4.76px;top:6.30px;font-size:25.5px;line-height:25.5px;color:#6e6e6e;transform:scaleX(0.8350)">Yes</span></div>
<div style="left:1168.5px;top:881.7px;width:352.3px;height:35.9px;overflow:hidden"><span class="t" style="left:5.58px;top:6.30px;font-size:25.5px;line-height:25.5px;color:#6e6e6e;transform:scaleX(0.9167)">Jowl</span></div>
<div style="left:1529.3px;top:881.7px;width:352.5px;height:35.9px;overflow:hidden"><span class="t" style="left:7.48px;top:6.30px;font-size:25.5px;line-height:25.5px;color:#6e6e6e;transform:scaleX(0.7091)">1</span></div>
<div style="left:2612px;top:881.7px;width:353px;height:35.9px;overflow:hidden"><span class="t" style="left:5.70px;top:6.30px;font-size:25.5px;line-height:25.5px;color:#6e6e6e;transform:scaleX(0.9042)">97.0</span></div>
<div style="left:446.5px;top:919.6px;width:353px;height:18.2px;overflow:hidden"><span class="t" style="left:6.58px;top:6.40px;font-size:25.5px;line-height:25.5px;color:#6e6e6e;transform:scaleX(0.9150)">Jowl - Skinless Meat 6mm Max Shift 1</span></div>
<div style="left:808px;top:919.6px;width:352px;height:18.2px;overflow:hidden"><span class="t" style="left:4.76px;top:6.40px;font-size:25.5px;line-height:25.5px;color:#6e6e6e;transform:scaleX(0.8350)">Yes</span></div>
<div style="left:1168.5px;top:919.6px;width:352.3px;height:18.2px;overflow:hidden"><span class="t" style="left:5.58px;top:6.40px;font-size:25.5px;line-height:25.5px;color:#6e6e6e;transform:scaleX(0.9167)">Jowl</span></div>
<div style="left:1529.3px;top:919.6px;width:352.5px;height:18.2px;overflow:hidden"><span class="t" style="left:7.48px;top:6.40px;font-size:25.5px;line-height:25.5px;color:#6e6e6e;transform:scaleX(0.7091)">1</span></div>
<div style="left:2612px;top:919.6px;width:353px;height:18.2px;overflow:hidden"><span class="t" style="left:5.70px;top:6.40px;font-size:25.5px;line-height:25.5px;color:#6e6e6e;transform:scaleX(0.9042)">97.0</span></div>
<span class="t" style="left:609.33px;top:966.00px;font-size:24.5px;line-height:24.5px;font-weight:700;color:#000;transform:scaleX(0.9653)">Active</span>
<span class="t" style="left:612.15px;top:1025.00px;font-size:24.5px;line-height:24.5px;font-weight:700;color:#000;transform:scaleX(1.0250)">Name</span>
<span class="t" style="left:691.06px;top:1019.00px;font-size:25px;line-height:25px;color:#3a3a3a;transform:scaleX(0.9686)">Belly -Herb</span>
<span class="t" style="left:518.95px;top:1086.00px;font-size:24.5px;line-height:24.5px;font-weight:700;color:#000;transform:scaleX(0.9748)">Planning Type</span>
<span class="t" style="left:697.62px;top:1084.00px;font-size:24.5px;line-height:24.5px;color:#333;transform:scaleX(0.9412)">Belly</span>
<span class="t" style="left:625.19px;top:1146.00px;font-size:24.5px;line-height:24.5px;font-weight:700;color:#000;transform:scaleX(1.0113)">Shift</span>
<span class="t" style="left:698.00px;top:1144.00px;font-size:24.5px;line-height:24.5px;color:#333;transform:scaleX(0.9000)">1</span>
<span class="t" style="left:570.49px;top:1206.00px;font-size:24.5px;line-height:24.5px;font-weight:700;color:#000;transform:scaleX(1.0028)">Hog Type</span>
<span class="t" style="left:598.05px;top:1266.00px;font-size:24.5px;line-height:24.5px;font-weight:700;color:#000;transform:scaleX(0.9506)">Gender</span>
<span class="t" style="left:505.51px;top:1325.00px;font-size:24.5px;line-height:24.5px;font-weight:700;color:#000;transform:scaleX(0.9960)">Merge Defaults</span>
<span class="t" style="left:448.95px;top:1426.00px;font-size:25.5px;line-height:25.5px;color:#1f1f2e;transform:scaleX(0.9740)">Priority</span>
<span class="t" style="left:545.10px;top:1426.00px;font-size:25.5px;line-height:25.5px;color:#1f1f2e;transform:scaleX(0.9049)">Cut Spec</span>
<span class="t" style="left:788.95px;top:1426.00px;font-size:25.5px;line-height:25.5px;color:#1f1f2e;transform:scaleX(0.9233)">Mix Percent</span>
<span class="t" style="left:1061.05px;top:1431.00px;font-size:24.5px;line-height:24.5px;font-weight:700;color:#000;transform:scaleX(0.9452)">Cut Spec</span>
<span class="t" style="left:1056.03px;top:1491.00px;font-size:24.5px;line-height:24.5px;font-weight:700;color:#000;transform:scaleX(0.9654)">Sub Type</span>
<span class="t" style="left:1088.46px;top:1552.00px;font-size:24.5px;line-height:24.5px;font-weight:700;color:#000;transform:scaleX(1.0224)">Mix %</span>
<span class="t" style="left:1075.35px;top:1611.00px;font-size:24.5px;line-height:24.5px;font-weight:700;color:#000;transform:scaleX(1.0235)">Default</span>
</body></html>
